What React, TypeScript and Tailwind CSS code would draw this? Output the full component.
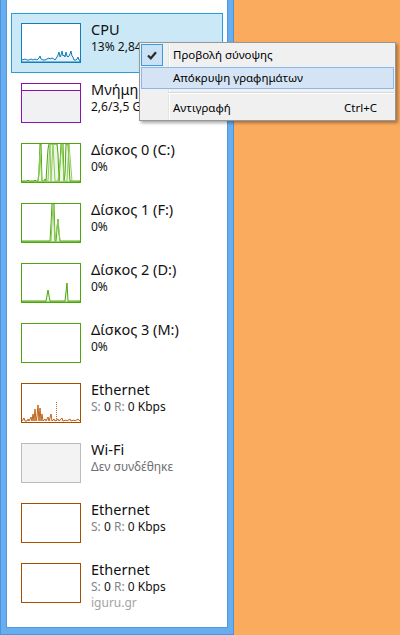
import React from "react";

type Item = {
  title: string;
  sub: React.ReactNode;
  extra?: string;
  kind: "cpu" | "mem" | "disk0" | "disk1" | "disk2" | "disk3" | "eth" | "wifi" | "ethEmpty";
  selected?: boolean;
};

const label = "text-[#848484]";

const items: Item[] = [
  { title: "CPU", sub: "13% 2,84 GHz", kind: "cpu", selected: true },
  { title: "Μνήμη", sub: "2,6/3,5 GB (74%)", kind: "mem" },
  { title: "Δίσκος 0 (C:)", sub: "0%", kind: "disk0" },
  { title: "Δίσκος 1 (F:)", sub: "0%", kind: "disk1" },
  { title: "Δίσκος 2 (D:)", sub: "0%", kind: "disk2" },
  { title: "Δίσκος 3 (M:)", sub: "0%", kind: "disk3" },
  {
    title: "Ethernet",
    sub: (
      <>
        <span className={label}>S:</span> 0 <span className={label}>R:</span> 0 Kbps
      </>
    ),
    kind: "eth",
  },
  { title: "Wi-Fi", sub: <span className="text-[#6f6f6f]">Δεν συνδέθηκε</span>, kind: "wifi" },
  {
    title: "Ethernet",
    sub: (
      <>
        <span className={label}>S:</span> 0 <span className={label}>R:</span> 0 Kbps
      </>
    ),
    kind: "ethEmpty",
  },
  {
    title: "Ethernet",
    sub: (
      <>
        <span className={label}>S:</span> 0 <span className={label}>R:</span> 0 Kbps
      </>
    ),
    extra: "iguru.gr",
    kind: "ethEmpty",
  },
];

function Graph({ kind }: { kind: Item["kind"] }) {
  if (kind === "wifi") {
    return <div className="h-[40px] w-[60px] shrink-0 border border-[#bcbcbc] bg-[#f3f3f3]" />;
  }
  if (kind === "mem") {
    return (
      <div className="flex h-[40px] w-[60px] shrink-0 flex-col border border-[#8b12ae] bg-white">
        <div className="h-[6px]" />
        <div className="flex-1 border-t border-[#8b12ae] bg-[#f1f0f2]" />
      </div>
    );
  }

  const border =
    kind === "cpu" ? "border-[#117dbb]" : kind.startsWith("disk") ? "border-[#4da60c]" : "border-[#a74f01]";

  return (
    <div className={`h-[40px] w-[60px] shrink-0 overflow-hidden border bg-white ${border}`}>
      <svg width="58" height="38" viewBox="0 0 58 38">
        {kind === "cpu" && (
          <polyline
            points="0,36 3,35 5,36 7,36 9,35 11,36 13,35 15,36 17,34 18,32 19,35 21,36 23,36 25,35 27,34 28,35 30,34 32,35 33,36 35,33 36,31 37,28 38,33 39,31 40,27 41,32 42,31 43,33 44,28 45,32 46,33 47,32 48,30 49,27 50,32 51,33 52,36 54,36 55,35 56,33 57,36 58,36 58,38 0,38"
            fill="#e8f1f9"
            stroke="#117dbb"
            strokeWidth="1"
          />
        )}
        {kind === "disk0" && (
          <>
            <polyline
              points="0,37 5,37 6,36 7,37 12,37 13,36 14,37 16,37 17,30 18,0 19,0 20,37 22,37 23,35 24,37 25,20 26,5 27,0 35,0 36,10 37,37 38,20 39,0 41,0 42,37 43,30 44,0 46,0 47,20 48,37 58,37 58,38 0,38"
              fill="#eef6e8"
              stroke="#4da60c"
              strokeWidth="1"
            />
            <polyline
              points="16,37 18,10 20,37 26,37 28,0 29,37 31,0 33,37 36,37 40,0 42,37 45,37 47,0 50,37"
              fill="none"
              stroke="#8fcb5c"
              strokeWidth="1"
            />
          </>
        )}
        {kind === "disk1" && (
          <>
            <polyline
              points="0,37 28,37 29,20 30,0 32,0 33,37 34,37 35,25 36,15 37,30 38,37 58,37 58,38 0,38"
              fill="#eef6e8"
              stroke="#4da60c"
              strokeWidth="1"
            />
            <polyline points="29,37 31,0 33,37 36,15 38,37" fill="none" stroke="#8fcb5c" strokeWidth="1" />
          </>
        )}
        {kind === "disk2" && (
          <polyline
            points="0,37 24,37 26,26 28,37 43,37 45,19 46,37 58,37 58,38 0,38"
            fill="#eef6e8"
            stroke="#4da60c"
            strokeWidth="1"
          />
        )}
        {kind === "eth" && (
          <>
            <polyline
              points="0,37 2,34 3,37 5,37 6,35 7,37 9,33 10,37 11,30 12,37 13,25 14,37 15,32 16,21 17,37 18,24 19,37 20,30 21,37 23,35 24,37 26,33 27,37 29,30 30,37 32,35 33,37 36,35 37,37 40,34 41,37 44,36 45,37 48,35 49,37 52,36 53,37 56,35 58,37"
              fill="#f6e6d6"
              stroke="#c0651a"
              strokeWidth="1"
            />
            <line x1="34.5" y1="18" x2="34.5" y2="38" stroke="#c0651a" strokeWidth="1" strokeDasharray="1 1" />
          </>
        )}
      </svg>
    </div>
  );
}

function Row({ item }: { item: Item }) {
  return (
    <div
      className={`mx-[4px] flex h-[60px] items-start gap-[10px] border px-[9px] pt-[9px] ${
        item.selected ? "border-[#26a0da] bg-[#cbe8f6]" : "border-transparent"
      }`}
    >
      <Graph kind={item.kind} />
      <div className="flex min-w-0 flex-col whitespace-nowrap">
        <div className="mt-[-3px] text-[14.5px] leading-[19px] text-[#111]">{item.title}</div>
        <div className="text-[12px] leading-[16px] text-[#111]">{item.sub}</div>
        {item.extra && <div className="text-[12px] leading-[15px] text-[#a3a3a3]">{item.extra}</div>}
      </div>
    </div>
  );
}

function ContextMenu() {
  return (
    <div className="absolute left-[139px] top-[42px] w-[257px] border border-[#979797] bg-[#f0f0f0] p-[1px] text-[11.5px] text-black shadow-[2px_2px_3px_rgba(0,0,0,0.35)]">
      <div className="relative">
        <div className="absolute bottom-0 left-[27px] top-0 w-[2px] border-l border-[#e2e3e3] bg-white" />
        <div className="relative flex h-[22px] items-center">
          <div className="flex h-[22px] w-[22px] items-center justify-center border border-[#3c9be0] bg-[#c9e2f6]">
            <svg width="10" height="9" viewBox="0 0 10 9">
              <path d="M1 4.5 L3.8 7.3 L9 1.2" fill="none" stroke="#2b2b2b" strokeWidth="2.2" />
            </svg>
          </div>
          <span className="ml-[10px]">Προβολή σύνοψης</span>
        </div>
        <div className="relative mt-[1px] flex h-[22px] items-center border border-[#8bb8e8] bg-[#d5e4f4] pl-[31px]">
          Απόκρυψη γραφημάτων
        </div>
        <div className="relative ml-[27px] mt-[3px] mb-[3px] h-[2px] border-t border-[#d7d7d7] bg-white" />
        <div className="relative flex h-[22px] items-center justify-between pl-[32px] pr-[17px]">
          <span>Αντιγραφή</span>
          <span>Ctrl+C</span>
        </div>
      </div>
    </div>
  );
}

export default function App() {
  return (
    <div
      className="relative flex h-[635px] w-[400px] bg-[#fbab5d]"
      style={{ fontFamily: '"Noto Sans", "Open Sans", sans-serif' }}
    >
      <div className="flex h-full w-[234px] flex-col border-x border-b border-[#4e93da] bg-[#67aef0] px-[5px] pb-[6px]">
        <div className="flex flex-1 flex-col border-x border-b border-[#5597dc] bg-white pt-[13px]">
          {items.map((item, i) => (
            <Row key={i} item={item} />
          ))}
        </div>
      </div>
      <ContextMenu />
    </div>
  );
}
